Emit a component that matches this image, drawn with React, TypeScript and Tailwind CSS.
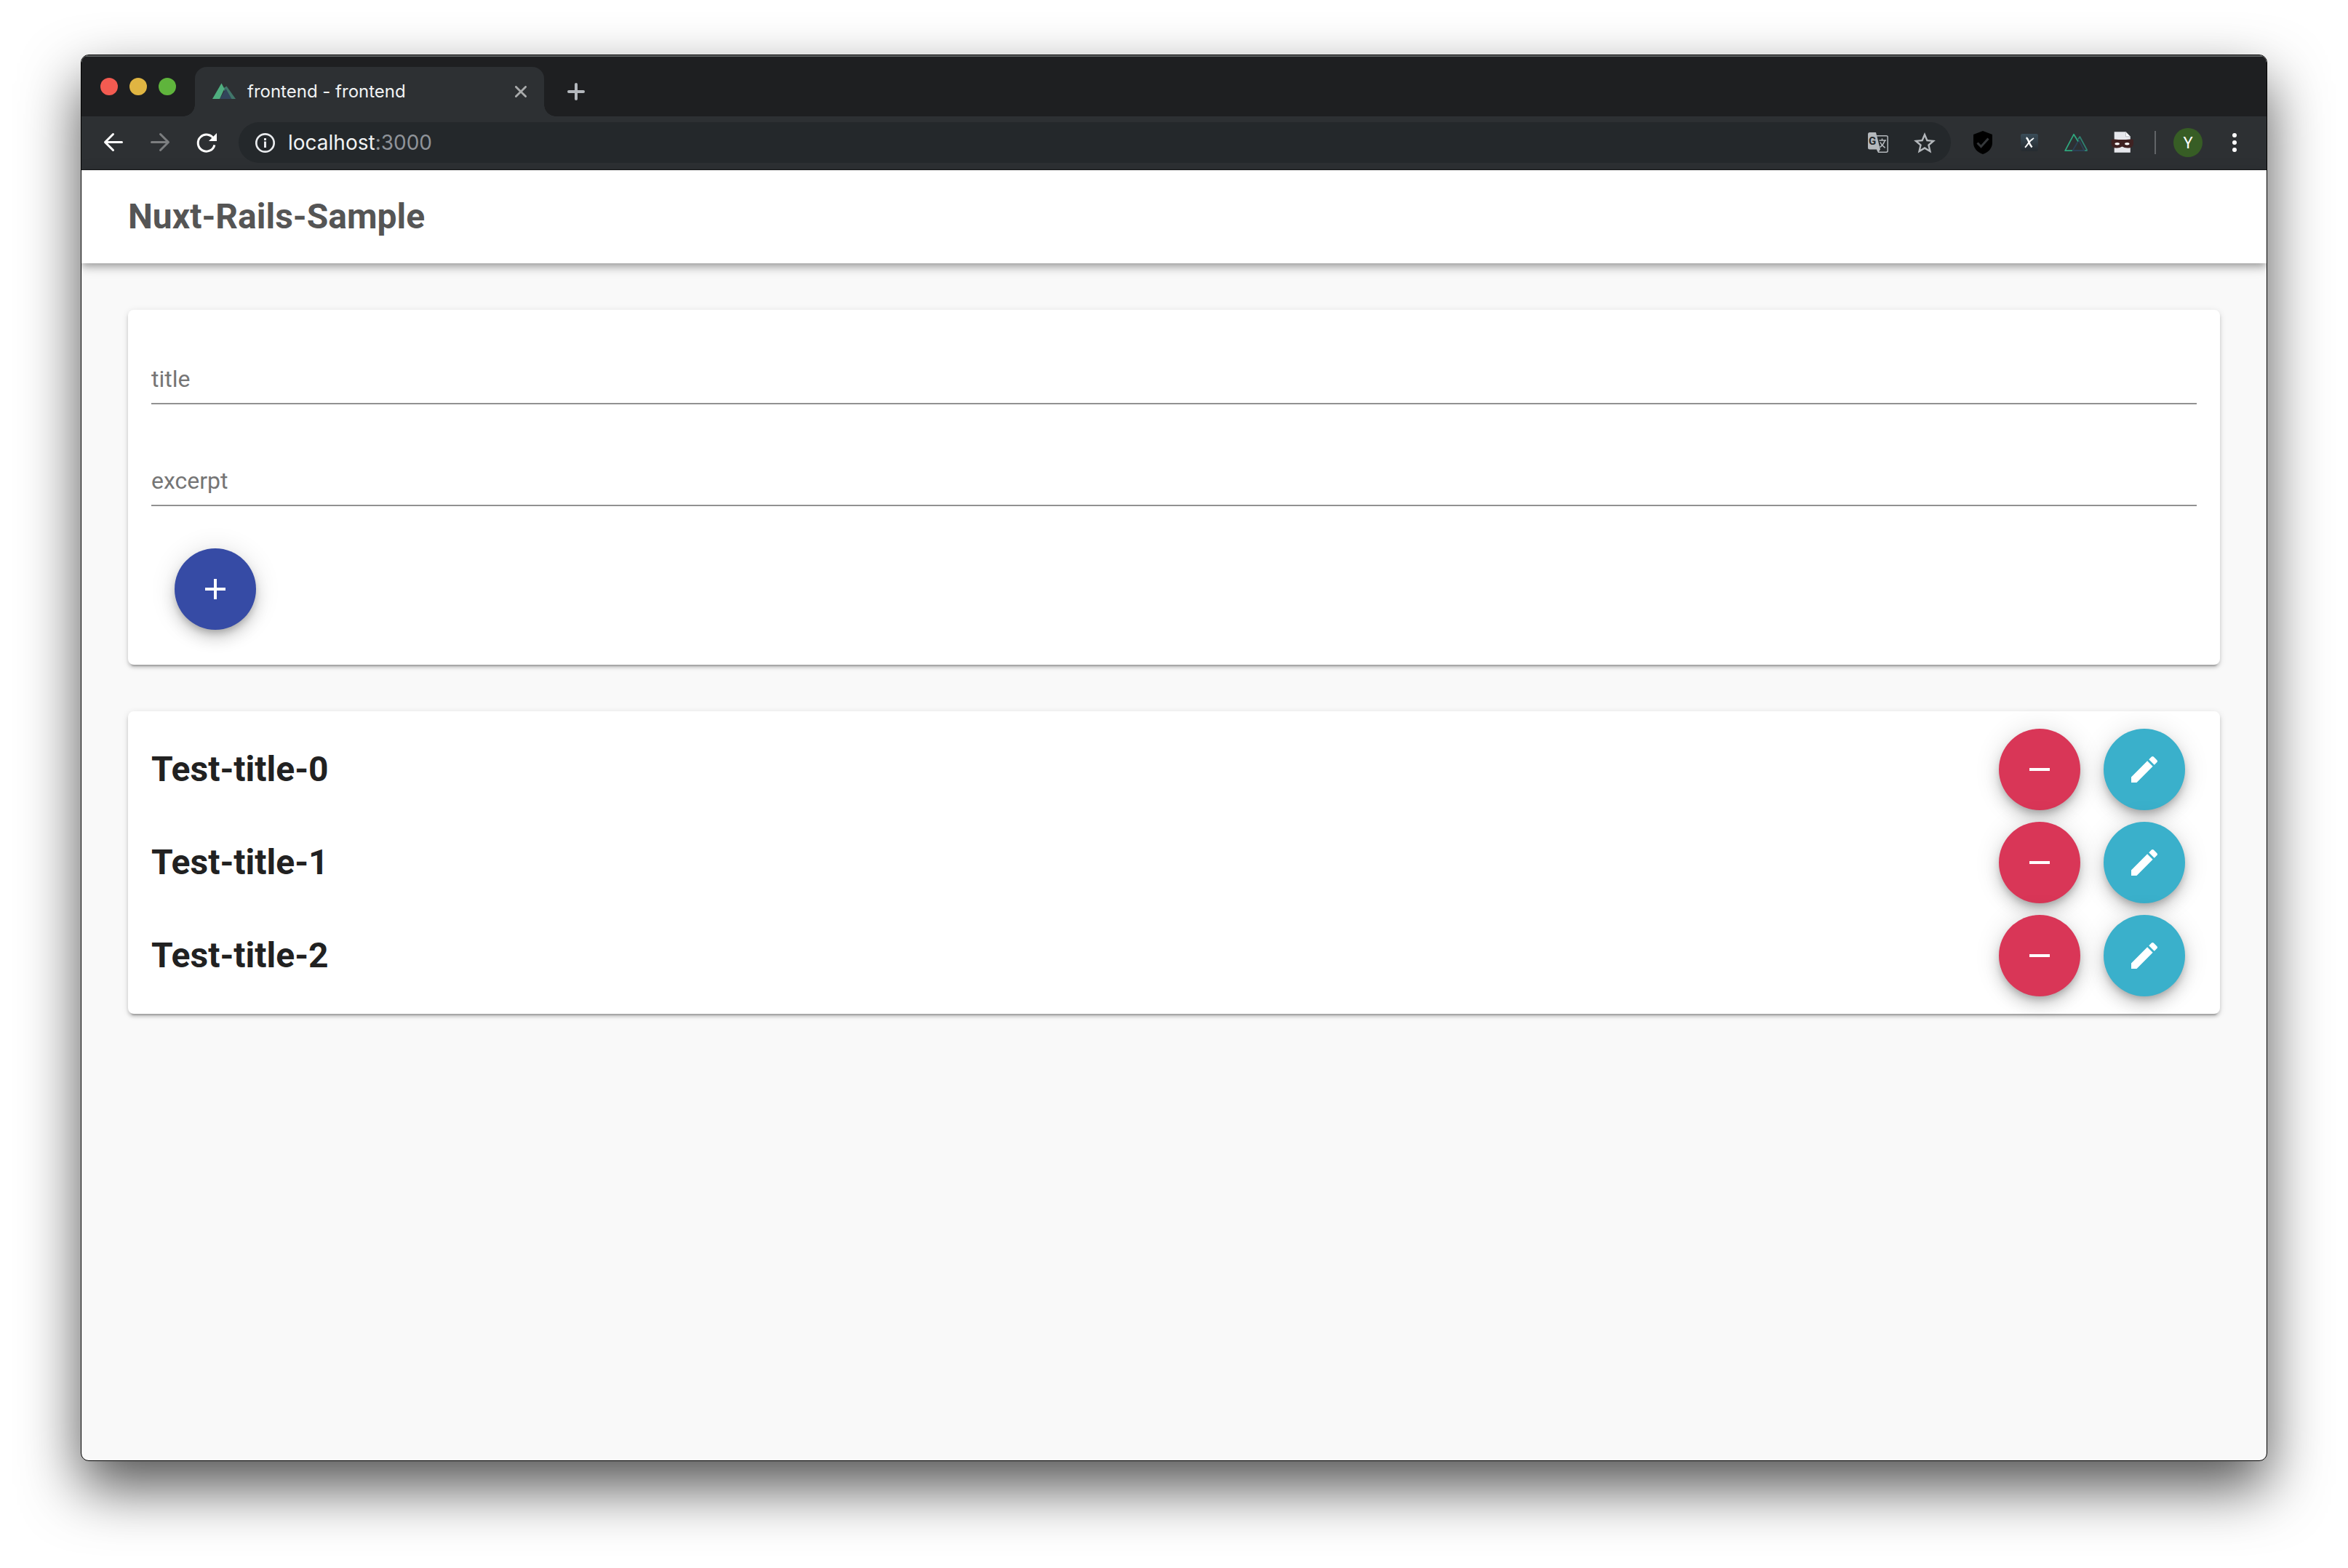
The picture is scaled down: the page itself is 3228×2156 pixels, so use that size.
import { useState } from 'react'

interface Post {
  id: number
  title: string
}

const initialPosts: Post[] = [
  { id: 0, title: 'Test-title-0' },
  { id: 1, title: 'Test-title-1' },
  { id: 2, title: 'Test-title-2' },
]

const cardClass =
  'rounded-lg bg-white shadow-[0_6px_2px_-4px_rgba(0,0,0,0.2),0_4px_4px_0_rgba(0,0,0,0.14),0_2px_10px_0_rgba(0,0,0,0.12)]'

const fabClass =
  'flex size-28 shrink-0 items-center justify-center rounded-full text-white shadow-[0_6px_10px_-2px_rgba(0,0,0,0.2),0_12px_20px_0_rgba(0,0,0,0.14),0_2px_36px_0_rgba(0,0,0,0.12)]'

function MdiIcon({ path }: { path: string }) {
  return (
    <svg viewBox="0 0 24 24" className="size-12" fill="currentColor">
      <path d={path} />
    </svg>
  )
}

const mdiPlus = 'M19,13H13V19H11V13H5V11H11V5H13V11H19V13Z'
const mdiMinus = 'M19,13H5V11H19V13Z'
const mdiPencil =
  'M20.71,7.04C21.1,6.65 21.1,6 20.71,5.63L18.37,3.29C18,2.9 17.35,2.9 16.96,3.29L15.12,5.12L18.87,8.87M3,17.25V21H6.75L17.81,9.93L14.06,6.18L3,17.25Z'
const mdiStarOutline =
  'M12,15.39L8.24,17.66L9.23,13.38L5.91,10.5L10.29,10.13L12,6.09L13.71,10.13L18.09,10.5L14.77,13.38L15.76,17.66M22,9.24L14.81,8.63L12,2L9.19,8.63L2,9.24L7.45,13.97L5.82,21L12,17.27L18.18,21L16.54,13.97L22,9.24Z'

function TabStrip() {
  return (
    <div className="flex h-[84px] items-end bg-[#1e1f21] shadow-[inset_0_2px_0_#5f6263]">
      <div className="flex h-[84px] w-[156px] items-start gap-4 pt-[31px] pl-[26px]">
        <span className="size-6 rounded-full bg-[#f35b51]" />
        <span className="size-6 rounded-full bg-[#e0b542]" />
        <span className="size-6 rounded-full bg-[#5fb43c]" />
      </div>
      <div className="relative flex h-[68px] w-[480px] items-center rounded-t-2xl bg-[#2d3033] pr-6 pl-6">
        <span className="absolute bottom-0 -left-4 size-4 bg-[radial-gradient(circle_at_0_0,transparent_15.5px,#2d3033_16px)]" />
        <span className="absolute -right-4 bottom-0 size-4 bg-[radial-gradient(circle_at_100%_0,transparent_15.5px,#2d3033_16px)]" />
        <svg viewBox="0 0 32 32" className="size-8">
          <path d="M14 12L19.5 8.5L32 26H26Z" fill="#41766a" />
          <path d="M10 26L18.5 12L26.5 26Z" fill="#32455b" />
          <path d="M0 26L12.5 4.5L16.5 12L10 26Z" fill="#4fae7f" />
        </svg>
        <span className="ml-4 text-[24px] leading-8 whitespace-nowrap text-[#f1f3f4]">frontend - frontend</span>
        <svg viewBox="0 0 16 16" className="ml-auto size-4" stroke="#a9abac" strokeWidth="2.8" strokeLinecap="round">
          <path d="M1.4 1.4L14.6 14.6M14.6 1.4L1.4 14.6" />
        </svg>
      </div>
      <div className="flex h-[68px] items-center pl-8">
        <svg viewBox="0 0 24 24" className="size-6" stroke="#b4b8bd" strokeWidth="4" strokeLinecap="round">
          <path d="M12 2V22M2 12H22" />
        </svg>
      </div>
    </div>
  )
}

function TranslateIcon() {
  return (
    <svg viewBox="0 0 32 32" className="size-8">
      <path d="M14 6.8H27.3Q29.2 6.8 29.2 8.7V27.3Q29.2 29.2 27.3 29.2H16.5L14.6 25.5" fill="none" stroke="#b4b8bc" strokeWidth="1.5" />
      <path d="M4.5 2H13L19 25.5H4.5Q2 25.5 2 23V4.5Q2 2 4.5 2Z" fill="#b4b8bc" />
      <path d="M14 25H19L16.5 29.6Z" fill="#b4b8bc" />
      <text x="2.9" y="18.8" fontSize="15" fontWeight="700" fill="#24282b" className="font-['Roboto',sans-serif]">G</text>
      <path d="M17.5 13H27M21.5 10.5V13M25.3 13Q23.5 19 18.5 22.5M18.8 15.5Q21 20.5 25.6 23.2" fill="none" stroke="#b4b8bc" strokeWidth="1.6" />
    </svg>
  )
}

function Toolbar() {
  return (
    <div className="flex h-[74px] items-start border-b border-[#1d1e20] bg-[#2d3033] pt-2">
      <div className="flex h-14 items-center gap-8 px-7">
        <svg viewBox="0 0 32 32" className="size-8" fill="none" stroke="#fff" strokeWidth="3" strokeLinecap="round" strokeLinejoin="round">
          <path d="M27.5 15.5H5M15.5 4.5L4.5 15.5L15.5 26.5" />
        </svg>
        <svg viewBox="0 0 32 32" className="size-8" fill="none" stroke="#7c7e80" strokeWidth="3" strokeLinecap="round" strokeLinejoin="round">
          <path d="M4.5 15.5H27M16.5 4.5L27.5 15.5L16.5 26.5" />
        </svg>
        <svg viewBox="0 0 32 32" className="size-8">
          <path d="M26 11.5A11.5 11.5 0 1 0 26.9 19.3" fill="none" stroke="#fff" strokeWidth="3" />
          <path d="M30 3V14H19Z" fill="#fff" />
        </svg>
      </div>
      <div className="flex h-14 flex-1 items-center rounded-full bg-[#24282b] px-5">
        <svg viewBox="0 0 32 32" className="size-8" fill="none">
          <circle cx="16.5" cy="16.5" r="12.2" stroke="#e8eaed" strokeWidth="2.7" />
          <path d="M16.5 14.5V23M16.5 10V13" stroke="#e8eaed" strokeWidth="3" />
        </svg>
        <span className="ml-4 text-[28px] leading-8 whitespace-nowrap text-[#f1f3f4]">
          localhost<span className="text-[#8f9399]">:3000</span>
        </span>
        <div className="ml-auto flex gap-8">
          <TranslateIcon />
          <svg viewBox="1.3 0.6 21.4 21.4" className="size-8" fill="#b4b8bc">
            <path d={mdiStarOutline} />
          </svg>
        </div>
      </div>
      <div className="flex h-14 items-center gap-8 px-7">
        <svg viewBox="0 0 32 32" className="size-8">
          <path d="M16 0L29 5V16Q29 27 16 32Q3 27 3 16V5Z" fill="#000" />
          <path d="M8.5 16.5L13.5 21.5L23.5 10.5" fill="none" stroke="#34373a" strokeWidth="3" />
        </svg>
        <svg viewBox="0 0 32 32" className="size-8" fill="none">
          <defs>
            <linearGradient id="xbg" x1="0" y1="0" x2="0" y2="1">
              <stop offset="0" stopColor="#3a4c58" />
              <stop offset="1" stopColor="#252b30" />
            </linearGradient>
          </defs>
          <rect x="4" y="4" width="24" height="24" rx="2.5" fill="url(#xbg)" />
          <path d="M11.5 9.5Q13.5 10 15 14.5T19.5 22.5" stroke="#fff" strokeWidth="2.4" />
          <path d="M22 10Q17.5 12.5 14.5 17T10 22.8" stroke="#fff" strokeWidth="2" />
        </svg>
        <svg viewBox="0 0 32 32" className="size-8" fill="none" strokeWidth="1.8" strokeLinejoin="round">
          <path d="M19 11.5L21.3 8L31 26V27H25.5" stroke="#2f8070" />
          <path d="M11.5 27L20 12.5L27.5 27Z" stroke="#2c4156" />
          <path d="M11 27.2H1.2L13 4.8L19 14.5" stroke="#2fa67d" />
        </svg>
        <svg viewBox="0 0 32 32" className="size-8">
          <path d="M4.7 1.3H20.5L26.8 7.8V29.8H4.7Z" fill="#e6e7ec" />
          <path d="M20.5 1.3V7.8H26.8Z" fill="#fff" stroke="#a9abb2" strokeWidth="0.7" />
          <path d="M0.7 12.5Q1.5 11 5 11.5Q15.5 12.5 26 11.5Q30.5 11 31 12.5V18.5Q29.5 23.5 24 23.5Q19 23.8 15.5 21.5Q12 23.8 7.5 23.5Q2 23.5 0.7 18.5Z" fill="#3f2222" />
          <ellipse cx="8.7" cy="17.8" rx="3.2" ry="1.7" fill="#fff" />
          <ellipse cx="22.3" cy="17.8" rx="3.2" ry="1.7" fill="#fff" />
        </svg>
      </div>
      <div className="flex h-14 items-center pr-7">
        <span className="h-8 w-0.5 bg-[#616467]" />
        <span className="ml-6 flex size-10 items-center justify-center rounded-full bg-[#375d25] font-['Roboto',sans-serif] text-[22px] text-white">
          Y
        </span>
        <svg viewBox="0 0 32 32" className="ml-7 size-8" fill="#fff">
          <circle cx="16" cy="6" r="3" />
          <circle cx="16" cy="16" r="3" />
          <circle cx="16" cy="26" r="3" />
        </svg>
      </div>
    </div>
  )
}

interface TextFieldProps {
  label: string
  value: string
  onChange: (value: string) => void
}

function TextField({ label, value, onChange }: TextFieldProps) {
  return (
    <label className="flex h-[66px] items-center border-b-2 border-[#919191] pb-0.5">
      <span className="text-[32px] leading-10 text-[#757575]">{label}</span>
      <input
        type="text"
        value={value}
        onChange={(e) => onChange(e.target.value)}
        className="flex-1 text-[32px] outline-none"
      />
    </label>
  )
}

export default function App() {
  const [posts, setPosts] = useState(initialPosts)
  const [title, setTitle] = useState('')
  const [excerpt, setExcerpt] = useState('')

  const addPost = () => {
    if (!title) return
    setPosts([...posts, { id: Date.now(), title }])
    setTitle('')
    setExcerpt('')
  }

  const removePost = (id: number) => {
    setPosts(posts.filter((post) => post.id !== id))
  }

  return (
    <div className="h-[2156px] w-[3228px] overflow-hidden bg-white px-[111px] pt-[75px] font-['Inter','Liberation_Sans',sans-serif]">
      <div className="h-[1934px] overflow-hidden rounded-[11px] border border-black bg-[#f9f9f9] shadow-[0_36px_80px_0_rgba(0,0,0,0.68)]">
        <TabStrip />
        <Toolbar />

        <div className="font-['Roboto',sans-serif]">
          <header className="flex h-32 items-center bg-white px-16 shadow-[0_4px_8px_-2px_rgba(0,0,0,0.2),0_8px_10px_0_rgba(0,0,0,0.14),0_2px_20px_0_rgba(0,0,0,0.12)]">
            <h1 className="text-[48px] leading-[64px] font-bold text-[#555]">Nuxt-Rails-Sample</h1>
          </header>

          <main className="flex flex-col gap-16 p-16">
            <section className={`${cardClass} h-[488px] px-8 pt-16`}>
              <TextField label="title" value={title} onChange={setTitle} />
              <div className="mt-[74px]">
                <TextField label="excerpt" value={excerpt} onChange={setExcerpt} />
              </div>
              <button type="button" onClick={addPost} className={`${fabClass} mt-[58px] ml-8 bg-[#364ba5]`}>
                <MdiIcon path={mdiPlus} />
              </button>
            </section>

            <section className={`${cardClass} py-4 pr-12 pl-8`}>
              {posts.map((post) => (
                <div key={post.id} className="flex h-32 items-center gap-8">
                  <h2 className="flex-1 text-[48px] leading-[64px] font-bold text-[#212121]">{post.title}</h2>
                  <button type="button" onClick={() => removePost(post.id)} className={`${fabClass} bg-[#d93657]`}>
                    <MdiIcon path={mdiMinus} />
                  </button>
                  <button type="button" className={`${fabClass} bg-[#3ab0cb]`}>
                    <MdiIcon path={mdiPencil} />
                  </button>
                </div>
              ))}
            </section>
          </main>
        </div>
      </div>
    </div>
  )
}
